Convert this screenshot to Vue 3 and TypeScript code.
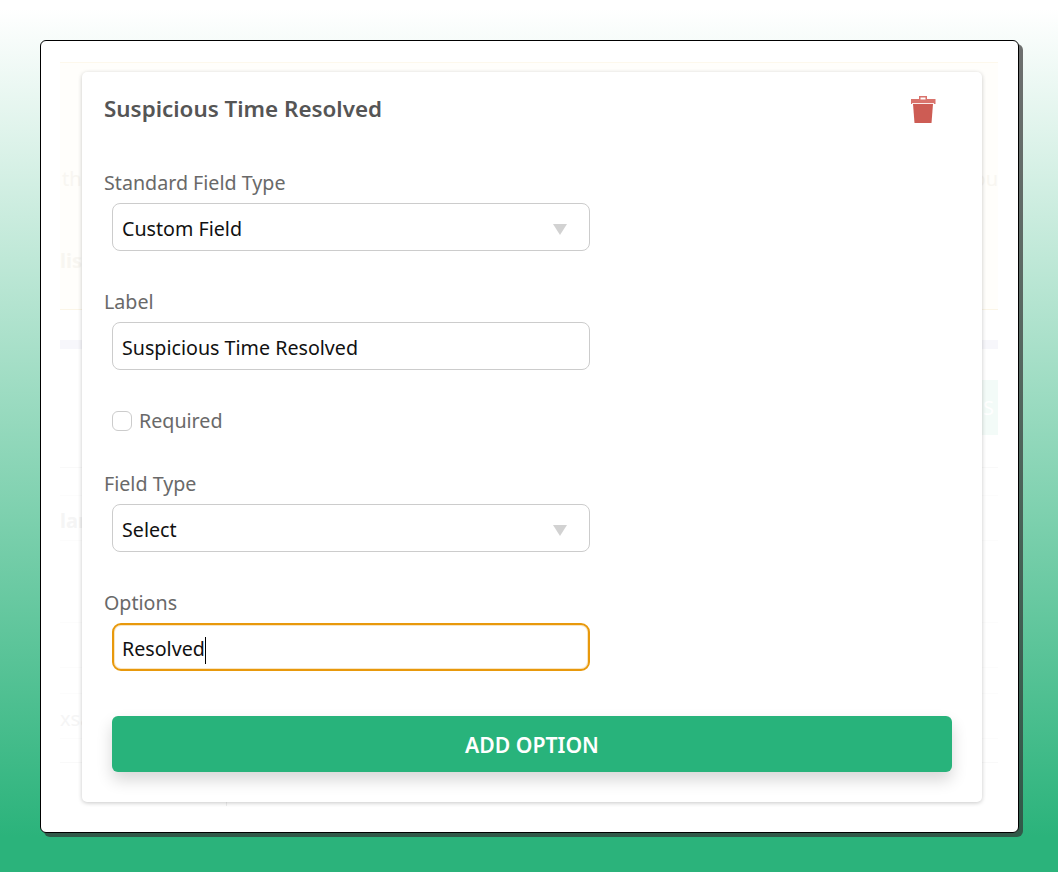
<script setup lang="ts">
import { ref } from "vue";

const standardType = ref("Custom Field");
const label = ref("Suspicious Time Resolved");
const required = ref(false);
const fieldType = ref("Select");
const option = ref("Resolved");
</script>

<template>
    <div class="page">
        <div class="window">
            <div class="ghost">
                <div class="ghost-panel">
                    <p class="ghost-line">th<span>ou</span></p>
                    <p class="ghost-head">lis</p>
                </div>
                <div class="ghost-bar"></div>
                <div class="ghost-action"><span>S</span></div>
                <div class="ghost-rule"></div>
                <div class="ghost-cell ghost-lar">lar</div>
                <div class="ghost-cell ghost-empty"></div>
                <div class="ghost-cell ghost-xsa">xsa</div>
                <div class="ghost-rule ghost-rule-end"></div>
                <div class="ghost-tick"></div>
            </div>

            <div class="card">
                <div class="card-head">
                    <h2 class="card-title">Suspicious Time Resolved</h2>
                    <svg class="trash" width="26" height="28" viewBox="0 0 26 28">
                        <path fill="#d9736c" d="M9 0h8v3h8.500v5H1V3H9zM10.500 1.500v2h5v-2z" />
                        <path fill="#fbe9e7" d="M2 7h22v1H2z" />
                        <path fill="#cd5c54" d="M3 8h20l-1.500 19H4.500z" />
                    </svg>
                </div>

                <div class="field">
                    <label class="field-label">Standard Field Type</label>
                    <div class="select-wrap">
                        <select v-model="standardType" class="control">
                            <option>Custom Field</option>
                        </select>
                        <span class="arrow"></span>
                    </div>
                </div>

                <div class="field">
                    <label class="field-label">Label</label>
                    <input v-model="label" class="control control-text" type="text" />
                </div>

                <label class="check">
                    <input v-model="required" type="checkbox" />
                    <span class="check-text">Required</span>
                </label>

                <div class="field">
                    <label class="field-label">Field Type</label>
                    <div class="select-wrap">
                        <select v-model="fieldType" class="control">
                            <option>Select</option>
                        </select>
                        <span class="arrow"></span>
                    </div>
                </div>

                <div class="field">
                    <label class="field-label">Options</label>
                    <div class="control control-focus">{{ option }}<i class="caret"></i></div>
                </div>

                <button class="add" type="button">ADD OPTION</button>
            </div>
        </div>
    </div>
</template>

<style>
html,
body {
    margin: 0;
}
</style>

<style scoped>
.page {
    box-sizing: border-box;
    height: 872px;
    padding: 40px 39px 0 40px;
    background: linear-gradient(180deg, #ffffff 1%, #2bb37b 96%);
    font-family: "Noto Sans", "Open Sans", sans-serif;
}

.window {
    position: relative;
    box-sizing: border-box;
    height: 793px;
    padding: 21px 20px 0 19px;
    background: #fff;
    border: 1px solid #000;
    border-radius: 6px;
    box-shadow: 4px 4px 0 rgba(51, 51, 51, 0.7);
}

.ghost {
    display: flex;
    flex-direction: column;
    color: #f8f6f1;
    font-size: 20px;
}

.ghost-panel {
    height: 246px;
    background: #fffefb;
    border-top: 1px solid #fdf8ec;
    border-bottom: 1px solid #fbf5e6;
}

.ghost-line {
    display: flex;
    justify-content: space-between;
    margin: 104px 0 0;
    padding-left: 2px;
    line-height: 24px;
}

.ghost-head {
    margin: 58px 0 0;
    font-weight: 700;
    line-height: 24px;
}

.ghost-bar {
    height: 9px;
    margin-top: 30px;
    background: #f7f7fb;
}

.ghost-action {
    display: flex;
    justify-content: flex-end;
    align-items: center;
    align-self: flex-end;
    width: 120px;
    height: 55px;
    margin-top: 31px;
    padding-right: 4px;
    box-sizing: border-box;
    color: #fff;
    background: #f3fbf8;
}

.ghost-rule {
    height: 1px;
    margin-top: 32px;
    background: #f9f9f9;
}

.ghost-rule-end {
    margin-top: 23px;
}

.ghost-cell {
    display: flex;
    align-items: flex-end;
    box-sizing: border-box;
    height: 46px;
    color: #f5f5f5;
    line-height: 26px;
    border-top: 1px solid #fcfcfc;
    border-bottom: 1px solid #fcfcfc;
}

.ghost-lar {
    margin-top: 27px;
    padding-bottom: 6px;
    font-weight: 700;
}

.ghost-empty {
    margin-top: 81px;
}

.ghost-xsa {
    margin-top: 25px;
    padding-bottom: 6px;
}

.ghost-tick {
    width: 1px;
    height: 4px;
    margin: 39px 0 0 166px;
    background: #eeeeee;
}

.card {
    position: absolute;
    top: 31px;
    left: 41px;
    box-sizing: border-box;
    width: 900px;
    height: 730px;
    padding: 0 22px;
    background: #fff;
    border-radius: 5px;
    box-shadow: 0 1px 4px rgba(0, 0, 0, 0.22);
}

.card-head {
    display: flex;
    justify-content: space-between;
    box-sizing: border-box;
    height: 98px;
    padding: 24px 24px 0 0;
}

.card-title {
    margin: 0;
    color: #555;
    font-size: 22.4px;
    font-weight: 600;
    line-height: 26px;
}

.field {
    display: flex;
    flex-direction: column;
    align-items: flex-start;
    margin-bottom: 38px;
}

.field-label {
    height: 33px;
    color: #696969;
    font-size: 19.67px;
    line-height: 26px;
}

.select-wrap {
    position: relative;
    margin-left: 8px;
}

.control {
    display: block;
    box-sizing: border-box;
    width: 478px;
    height: 48px;
    margin-left: 8px;
    padding: 4px 9px 0;
    color: #111;
    font: inherit;
    font-size: 19.67px;
    line-height: 42px;
    background: #fff;
    border: 1px solid #ccc;
    border-radius: 8px;
    outline: none;
    appearance: none;
}

.control-text {
    padding-top: 2px;
}

.select-wrap .control {
    margin-left: 0;
}

.arrow {
    position: absolute;
    top: 21px;
    right: 23px;
    border-top: 11px solid #d2d2d2;
    border-left: 7px solid transparent;
    border-right: 7px solid transparent;
}

.control-focus {
    padding: 3px 8px 0;
    border: 2px solid #e8990c;
    border-radius: 9px;
    box-shadow: inset 0 0 0 1px rgba(232, 153, 12, 0.25);
}

.caret {
    display: inline-block;
    width: 1px;
    height: 27px;
    vertical-align: -8px;
    background: #000;
}

.check {
    display: flex;
    align-items: center;
    gap: 7px;
    height: 26px;
    margin: 0 0 37px 8px;
    color: #696969;
    font-size: 19.67px;
}

.check-text {
    padding-bottom: 2px;
}

.check input {
    box-sizing: border-box;
    width: 20px;
    height: 20px;
    margin: 0;
    border: 1px solid #ccc;
    border-radius: 6px;
    appearance: none;
}

.add {
    display: block;
    box-sizing: border-box;
    width: 840px;
    height: 56px;
    margin: 45px 0 0 8px;
    padding: 0;
    color: #fff;
    font: inherit;
    font-size: 21.2px;
    font-weight: 600;
    background: #28b37b;
    border: 0;
    border-radius: 6px;
    box-shadow: 0 8px 16px rgba(0, 0, 0, 0.16);
}
</style>
